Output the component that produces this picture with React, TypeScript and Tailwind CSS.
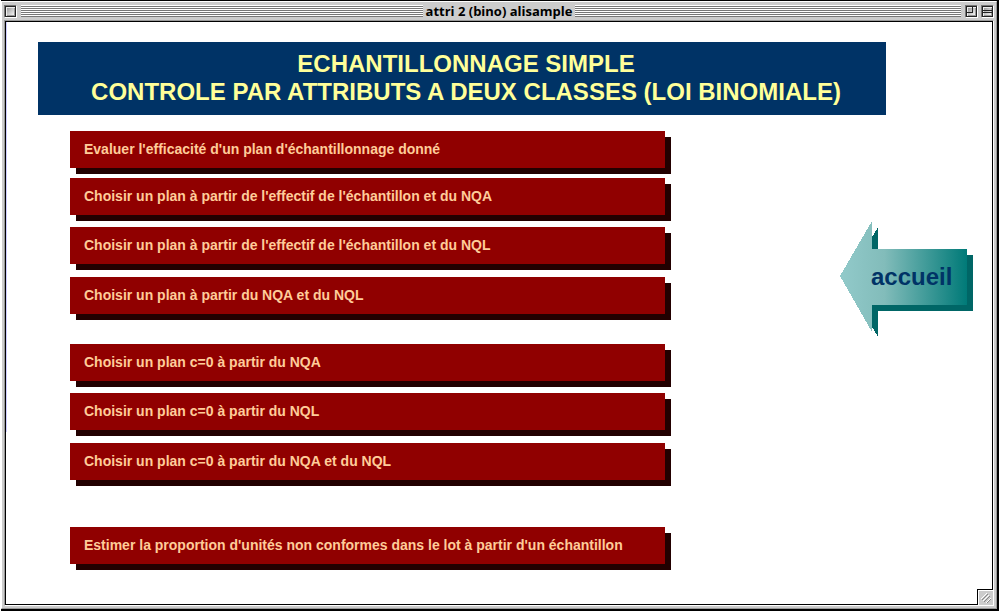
import React from "react";

type Choice = { label: string; spacing: string };

const choices: Choice[] = [
  { label: "Evaluer l'efficacité d'un plan d'échantillonnage donné", spacing: "mt-4" },
  { label: "Choisir un plan à partir de l'effectif de l'échantillon et du NQA", spacing: "mt-[10px]" },
  { label: "Choisir un plan à partir de l'effectif de l'échantillon et du NQL", spacing: "mt-3" },
  { label: "Choisir un plan à partir du NQA et du NQL", spacing: "mt-[13px]" },
  { label: "Choisir un plan c=0 à partir du NQA", spacing: "mt-[30px]" },
  { label: "Choisir un plan c=0 à partir du NQL", spacing: "mt-3" },
  { label: "Choisir un plan c=0 à partir du NQA et du NQL", spacing: "mt-[13px]" },
  { label: "Estimer la proportion d'unités non conformes dans le lot à partir d'un échantillon", spacing: "mt-[47px]" },
];

function Stripes() {
  return (
    <div className="h-3 min-w-0 flex-1 bg-[repeating-linear-gradient(to_bottom,#ffffff_0px,#ffffff_1px,#777777_1px,#777777_2px)]" />
  );
}

function TitleButton({ label, children }: { label: string; children?: React.ReactNode }) {
  return (
    <button type="button" aria-label={label} className="size-[13px] shrink-0">
      <svg viewBox="0 0 13 13" className="block size-full" shapeRendering="crispEdges">
        <defs>
          <linearGradient id="bevel" x1="0" y1="0" x2="1" y2="1">
            <stop offset="0" stopColor="#9a9a9a" />
            <stop offset="1" stopColor="#f4f4f4" />
          </linearGradient>
        </defs>
        <path d="M0 0H12V1H1V12H0Z" fill="#777777" />
        <path d="M12 1H13V13H1V12H12Z" fill="#ffffff" />
        <rect x="1" y="1" width="11" height="11" fill="#222222" />
        <rect x="2" y="2" width="9" height="9" fill="#eeeeee" />
        <rect x="3" y="3" width="8" height="8" fill="#999999" />
        <rect x="3" y="3" width="7" height="7" fill="url(#bevel)" />
        {children}
      </svg>
    </button>
  );
}

function TitleBar() {
  return (
    <header className="grid h-[18px] shrink-0 grid-cols-[1fr_auto_1fr] items-center">
      <div className="flex items-center gap-1">
        <TitleButton label="Fermer" />
        <Stripes />
      </div>
      <h1 className="px-[3px] pb-px font-['Open_Sans',sans-serif] text-[13px] leading-4 font-bold text-black">
        attri 2 (bino) alisample
      </h1>
      <div className="flex items-center gap-1">
        <Stripes />
        <div className="flex shrink-0 gap-[3px]">
          <TitleButton label="Agrandir">
            <path d="M2 7H7V2" fill="none" stroke="#222222" />
          </TitleButton>
          <TitleButton label="Réduire">
            <path d="M2 5.5H11M2 7.5H11" fill="none" stroke="#222222" />
          </TitleButton>
        </div>
      </div>
    </header>
  );
}

function HomeArrow() {
  return (
    <a href="#accueil" className="mt-[107px] mr-[19px] grid h-[115px] w-[133px] shrink-0 items-center">
      <svg viewBox="0 0 133 115" className="col-start-1 row-start-1 size-full" shapeRendering="crispEdges" aria-hidden="true">
        <defs>
          <linearGradient id="arrow" x1="0" y1="0" x2="1" y2="0">
            <stop offset="0" stopColor="#92caca" />
            <stop offset="0.35" stopColor="#82bcba" />
            <stop offset="1" stopColor="#007a78" />
          </linearGradient>
        </defs>
        <path d="M6 60L38 5V33H133V89H38V115Z" fill="#006666" />
        <path d="M0 54L32 -1V27H127V83H32V110Z" fill="url(#arrow)" />
      </svg>
      <span className="z-10 col-start-1 row-start-1 pr-[6px] pb-[6px] pl-[31px] text-[24px] leading-7 font-bold text-[#003366]">
        accueil
      </span>
    </a>
  );
}

export default function App() {
  return (
    <div className="min-h-screen bg-white pl-px font-['Liberation_Sans',Arial,sans-serif]">
      <div className="flex min-h-screen flex-col border-t border-r-2 border-b-2 border-black">
        <div className="flex grow flex-col border-t border-r border-b border-l border-t-white border-r-[#999999] border-b-[#999999] border-l-white bg-[#cccccc] pr-[2px] pb-[2px] pl-[2px]">
          <TitleBar />
          <div className="flex grow flex-col border-t border-r border-b border-l border-t-[#999999] border-r-white border-b-white border-l-[#999999]">
            <main className="relative flex grow flex-col border border-black bg-white pt-5 pl-8">
              <div className="absolute top-0 left-0 h-[410px] w-px bg-[#ccccff]" />
              <h2 className="mr-8 max-w-[848px] bg-[#003366] pt-2 pr-3 pb-[9px] pl-5 text-center text-[24px] leading-7 font-bold text-[#ffff99]">
                ECHANTILLONNAGE SIMPLE
                <br />
                CONTROLE PAR ATTRIBUTS A DEUX CLASSES (LOI BINOMIALE)
              </h2>
              <div className="flex items-start justify-between gap-8">
                <nav className="flex max-w-[627px] grow flex-col pb-8 pl-8">
                  {choices.map(({ label, spacing }) => (
                    <button
                      key={label}
                      type="button"
                      className={`${spacing} min-h-[37px] bg-[#900000] px-[14px] pb-[2px] text-left text-[14px] leading-5 font-bold text-[#ffcc99] shadow-[6px_6px_0_#220000]`}
                    >
                      {label}
                    </button>
                  ))}
                </nav>
                <HomeArrow />
              </div>
              <svg
                viewBox="0 0 16 16"
                className="absolute -right-px -bottom-px size-4"
                shapeRendering="crispEdges"
                aria-hidden="true"
              >
                <rect width="16" height="16" fill="#000000" />
                <rect x="1" y="1" width="15" height="15" fill="#ffffff" />
                <rect x="2" y="2" width="14" height="14" fill="#cccccc" />
                <path d="M4 10L10 4M6 12L12 6M9 14L14 9" stroke="#ffffff" fill="none" />
                <path d="M5 11L11 5M7 13L13 7M10 14L14 10" stroke="#888888" fill="none" />
              </svg>
            </main>
          </div>
        </div>
      </div>
    </div>
  );
}
